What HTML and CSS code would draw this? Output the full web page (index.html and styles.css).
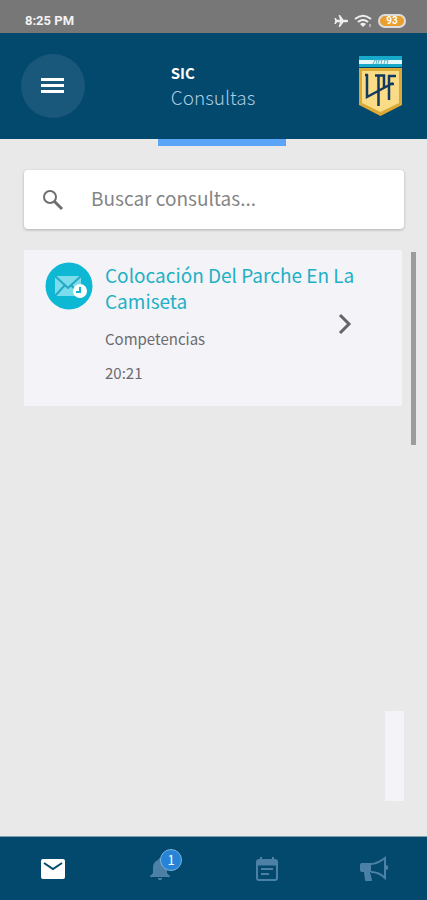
FILE: index.html
```html
<!DOCTYPE html>
<html lang="es">
<head>
    <meta charset="UTF-8">
    <meta name="viewport" content="width=device-width, initial-scale=1.0">
    <title>SIC - Consultas</title>
    <link rel="stylesheet" href="styles.css">
</head>
<body>
    <div class="status-bar">
        <span class="clock">8:25 PM</span>
        <div class="status-icons">
            <svg width="14" height="14" viewBox="0 0 14 14" fill="#eee">
                <path d="M14 7c0-.9-.5-1.300-1.200-1.300H9.500L6 1H4.600l1.400 4.700H3L1.800 4H.4L1.200 7 .4 10h1.400L3 8.300h3L4.600 13H6l3.500-4.700h3.300C13.500 8.300 14 7.900 14 7z"/>
            </svg>
            <svg width="18" height="14" viewBox="0 0 18 14" fill="none" stroke="#eee" stroke-width="2">
                <path d="M1 5q8-6.500 16 0M4 8q5-4 10 0"/>
                <path d="M6 10q3-2.500 6 0l-3 3z" fill="#eee" stroke="none"/>
                <path d="M16 10v3" stroke-width="1"/>
            </svg>
            <span class="battery">93</span>
        </div>
    </div>

    <header>
        <button class="menu-btn" aria-label="Menú">
            <svg width="24" height="18" viewBox="0 0 24 18" fill="#fff">
                <path d="M0 1h23v3H0zM0 7h23v3H0zM0 13h23v3H0z"/>
            </svg>
        </button>
        <div class="heading">
            <strong>SIC</strong>
            <h1>Consultas</h1>
        </div>
        <svg class="logo" width="48" height="60" viewBox="0 0 48 60" role="img" aria-label="LPF">
            <path d="M2 0h43v11H2z" fill="#16a9c9"/>
            <path d="M2 4h43v4H2z" fill="#e6f7fa"/>
            <path d="M16 8l2-4 2 0-1 4M21 8l1-4h3l-1 4M27 8l1-4h3l-1 4" fill="none" stroke="#58b6cb" stroke-width="1"/>
            <path d="M2 12h43v37L23.500 60 2 49z" fill="#dba936"/>
            <path d="M5 15h37v32L23.500 56 5 47z" fill="#fbdc86"/>
            <path d="M8 19h3M10 18v23l26-14M18 19.500h9v12M21.500 20v30M32 44V20h7M32 28h5" fill="none" stroke="#12395f" stroke-width="2.500"/>
        </svg>
        <span class="indicator"></span>
    </header>

    <main>
        <label class="search">
            <svg width="22" height="22" viewBox="0 0 22 22" fill="none" stroke="#6e6e6e">
                <circle cx="8" cy="8" r="6" stroke-width="2"/>
                <path d="M12 12l8 8" stroke-width="3"/>
            </svg>
            <input type="text" placeholder="Buscar consultas..." aria-label="Buscar consultas">
        </label>

        <a href="#" class="card">
            <svg class="card-icon" width="48" height="48" viewBox="0 0 48 48">
                <circle cx="24" cy="24" r="23.500" fill="#0cb8d4"/>
                <path d="M10 14h26v20H10z" fill="#7bdcec"/>
                <path d="M10 14l13 12 13-12M10 34l10-11M36 34L26 23" fill="none" stroke="#22a9c4" stroke-width="2"/>
                <circle cx="35" cy="29" r="7" fill="#fff"/>
                <path d="M35 25v5h-4" fill="none" stroke="#0cb8d4" stroke-width="2"/>
            </svg>
            <div class="card-info">
                <h2>Colocación Del Parche En La Camiseta</h2>
                <p>Competencias</p>
                <p>20:21</p>
            </div>
            <svg class="chevron" width="14" height="22" viewBox="0 0 14 22" fill="none" stroke="#666468" stroke-width="3">
                <path d="M2 2l9 9-9 9"/>
            </svg>
        </a>
        <span class="scrollbar"></span>
        <span class="side-tab"></span>
    </main>

    <nav>
        <a href="#" class="active" aria-label="Mensajes">
            <svg width="26" height="22" viewBox="0 0 26 22">
                <rect x="1" y="1" width="24" height="20" rx="2" fill="currentColor"/>
                <path d="M4 5l9 6 9-6" fill="none" stroke="#03486d" stroke-width="2"/>
            </svg>
        </a>
        <a href="#" aria-label="Notificaciones">
            <span class="bell">
                <svg width="20" height="24" viewBox="0 0 20 24" fill="currentColor">
                    <path d="M10 1c1 0 2 1 2 2 3 1 5 4 5 7v6l3 3v1H0v-1l3-3v-6c0-3 2-6 5-7 0-1 1-2 2-2zM8 21h4c0 3-4 3-4 0z"/>
                </svg>
                <span class="badge">1</span>
            </span>
        </a>
        <a href="#" aria-label="Agenda">
            <svg width="22" height="24" viewBox="0 0 22 24" fill="none" stroke="currentColor" stroke-width="2">
                <rect x="1" y="3" width="20" height="20" rx="2"/>
                <path d="M1 5h20M1 7h20" stroke-width="3"/>
                <path d="M5 0v4M17 0v4M5 12h12M5 17h8"/>
            </svg>
        </a>
        <a href="#" aria-label="Novedades">
            <svg width="30" height="26" viewBox="0 0 30 26" fill="currentColor">
                <path d="M3 7h9v9h-1l2 8c0 1-1 1-1 1H8c-1 0-2 0-2-1l-1-8H3c-2 0-2-2-2-2V9s0-2 2-2z"/>
                <path d="M12 8c5 0 10-3 14-6v20c-4-4-9-6-14-6" fill="none" stroke="currentColor" stroke-width="2"/>
                <path d="M27 9c3 0 3 5 0 5z"/>
            </svg>
        </a>
    </nav>
</body>
</html>
```
FILE: styles.css
```css
* {
    margin: 0;
    padding: 0;
    box-sizing: border-box;
}

body {
    display: flex;
    flex-direction: column;
    min-height: 100vh;
    background-color: #e9e9e9;
    font-family: 'Noto Sans CJK JP', 'Open Sans', sans-serif;
}

a {
    color: inherit;
    text-decoration: none;
}

.status-bar {
    display: flex;
    justify-content: space-between;
    align-items: center;
    height: 33px;
    padding: 8px 21px 0 25px;
    background-color: #777;
    color: #f2f2f2;
    font-family: Roboto, sans-serif;
    font-weight: bold;
}

.clock {
    font-size: 13px;
}

.status-icons {
    display: flex;
    align-items: center;
    gap: 6px;
}

.battery {
    width: 28px;
    border: 2px solid #ddd;
    border-radius: 7px;
    background-color: #eb9f2e;
    color: #fff;
    font-size: 10px;
    line-height: 10px;
    text-align: center;
}

header {
    position: relative;
    display: grid;
    grid-template-columns: 1fr auto 1fr;
    align-items: center;
    height: 106px;
    padding: 0 22px 0 21px;
    background-color: #03486d;
    color: #fff;
}

.menu-btn {
    display: flex;
    align-items: center;
    justify-content: center;
    width: 64px;
    height: 64px;
    border: none;
    border-radius: 50%;
    background-color: #1a587b;
    cursor: pointer;
}

.heading {
    padding-bottom: 3px;
}

.heading strong {
    display: block;
    font-size: 15px;
    line-height: 24px;
}

.heading h1 {
    color: #a9cce0;
    font-size: 19px;
    font-weight: 300;
    line-height: 24px;
}

.logo {
    justify-self: end;
}

.indicator {
    position: absolute;
    top: 100%;
    right: 33%;
    width: 30%;
    height: 7px;
    background-color: #5aa5f8;
}

main {
    position: relative;
    flex: 1;
    padding: 31px 23px 31px 24px;
}

.search {
    display: flex;
    align-items: center;
    gap: 27px;
    height: 59px;
    margin-bottom: 21px;
    padding: 0 18px;
    border-radius: 4px;
    background-color: #fff;
    box-shadow: 0 1px 3px rgba(0, 0, 0, 0.25);
}

.search input {
    flex: 1;
    min-width: 0;
    padding-bottom: 4px;
    border: none;
    outline: none;
    background: none;
    color: #555;
    font-family: inherit;
    font-size: 19px;
}

.search input::placeholder {
    color: #858585;
}

.card {
    display: flex;
    gap: 12px;
    padding: 12px 50px 16px 21px;
    margin-right: 2px;
    background-color: #f4f3f7;
}

.card-icon {
    flex-shrink: 0;
}

.card-info {
    flex: 1;
}

/* the title runs over the space kept for the chevron */
.card-info h2 {
    color: #22b0c6;
    font-size: 19px;
    font-weight: 400;
    line-height: 26px;
    margin-right: -36px;
    margin-bottom: 8px;
}

.card-info p {
    color: #6c6b6f;
    font-size: 15px;
    line-height: 34px;
}

.chevron {
    align-self: center;
    margin-bottom: 5px;
}

.scrollbar {
    position: absolute;
    top: 113px;
    right: 11px;
    width: 5px;
    height: 193px;
    background-color: #9c9c9c;
}

.side-tab {
    position: absolute;
    right: 23px;
    bottom: 35px;
    width: 19px;
    height: 90px;
    background-color: #f4f3f7;
}

nav {
    display: grid;
    grid-template-columns: repeat(4, 1fr);
    height: 64px;
    border-top: 1px solid #809fae;
    background-color: #03486d;
}

nav a {
    display: flex;
    align-items: center;
    justify-content: center;
    color: #4c80a4;
}

nav a.active {
    color: #fff;
}

.bell {
    position: relative;
    display: flex;
}

.badge {
    position: absolute;
    top: -8px;
    right: -12px;
    width: 22px;
    height: 22px;
    border: 1px solid #78b4e0;
    border-radius: 50%;
    background-color: #2683d6;
    color: #fff;
    font-size: 13px;
    line-height: 20px;
    text-align: center;
}
```
